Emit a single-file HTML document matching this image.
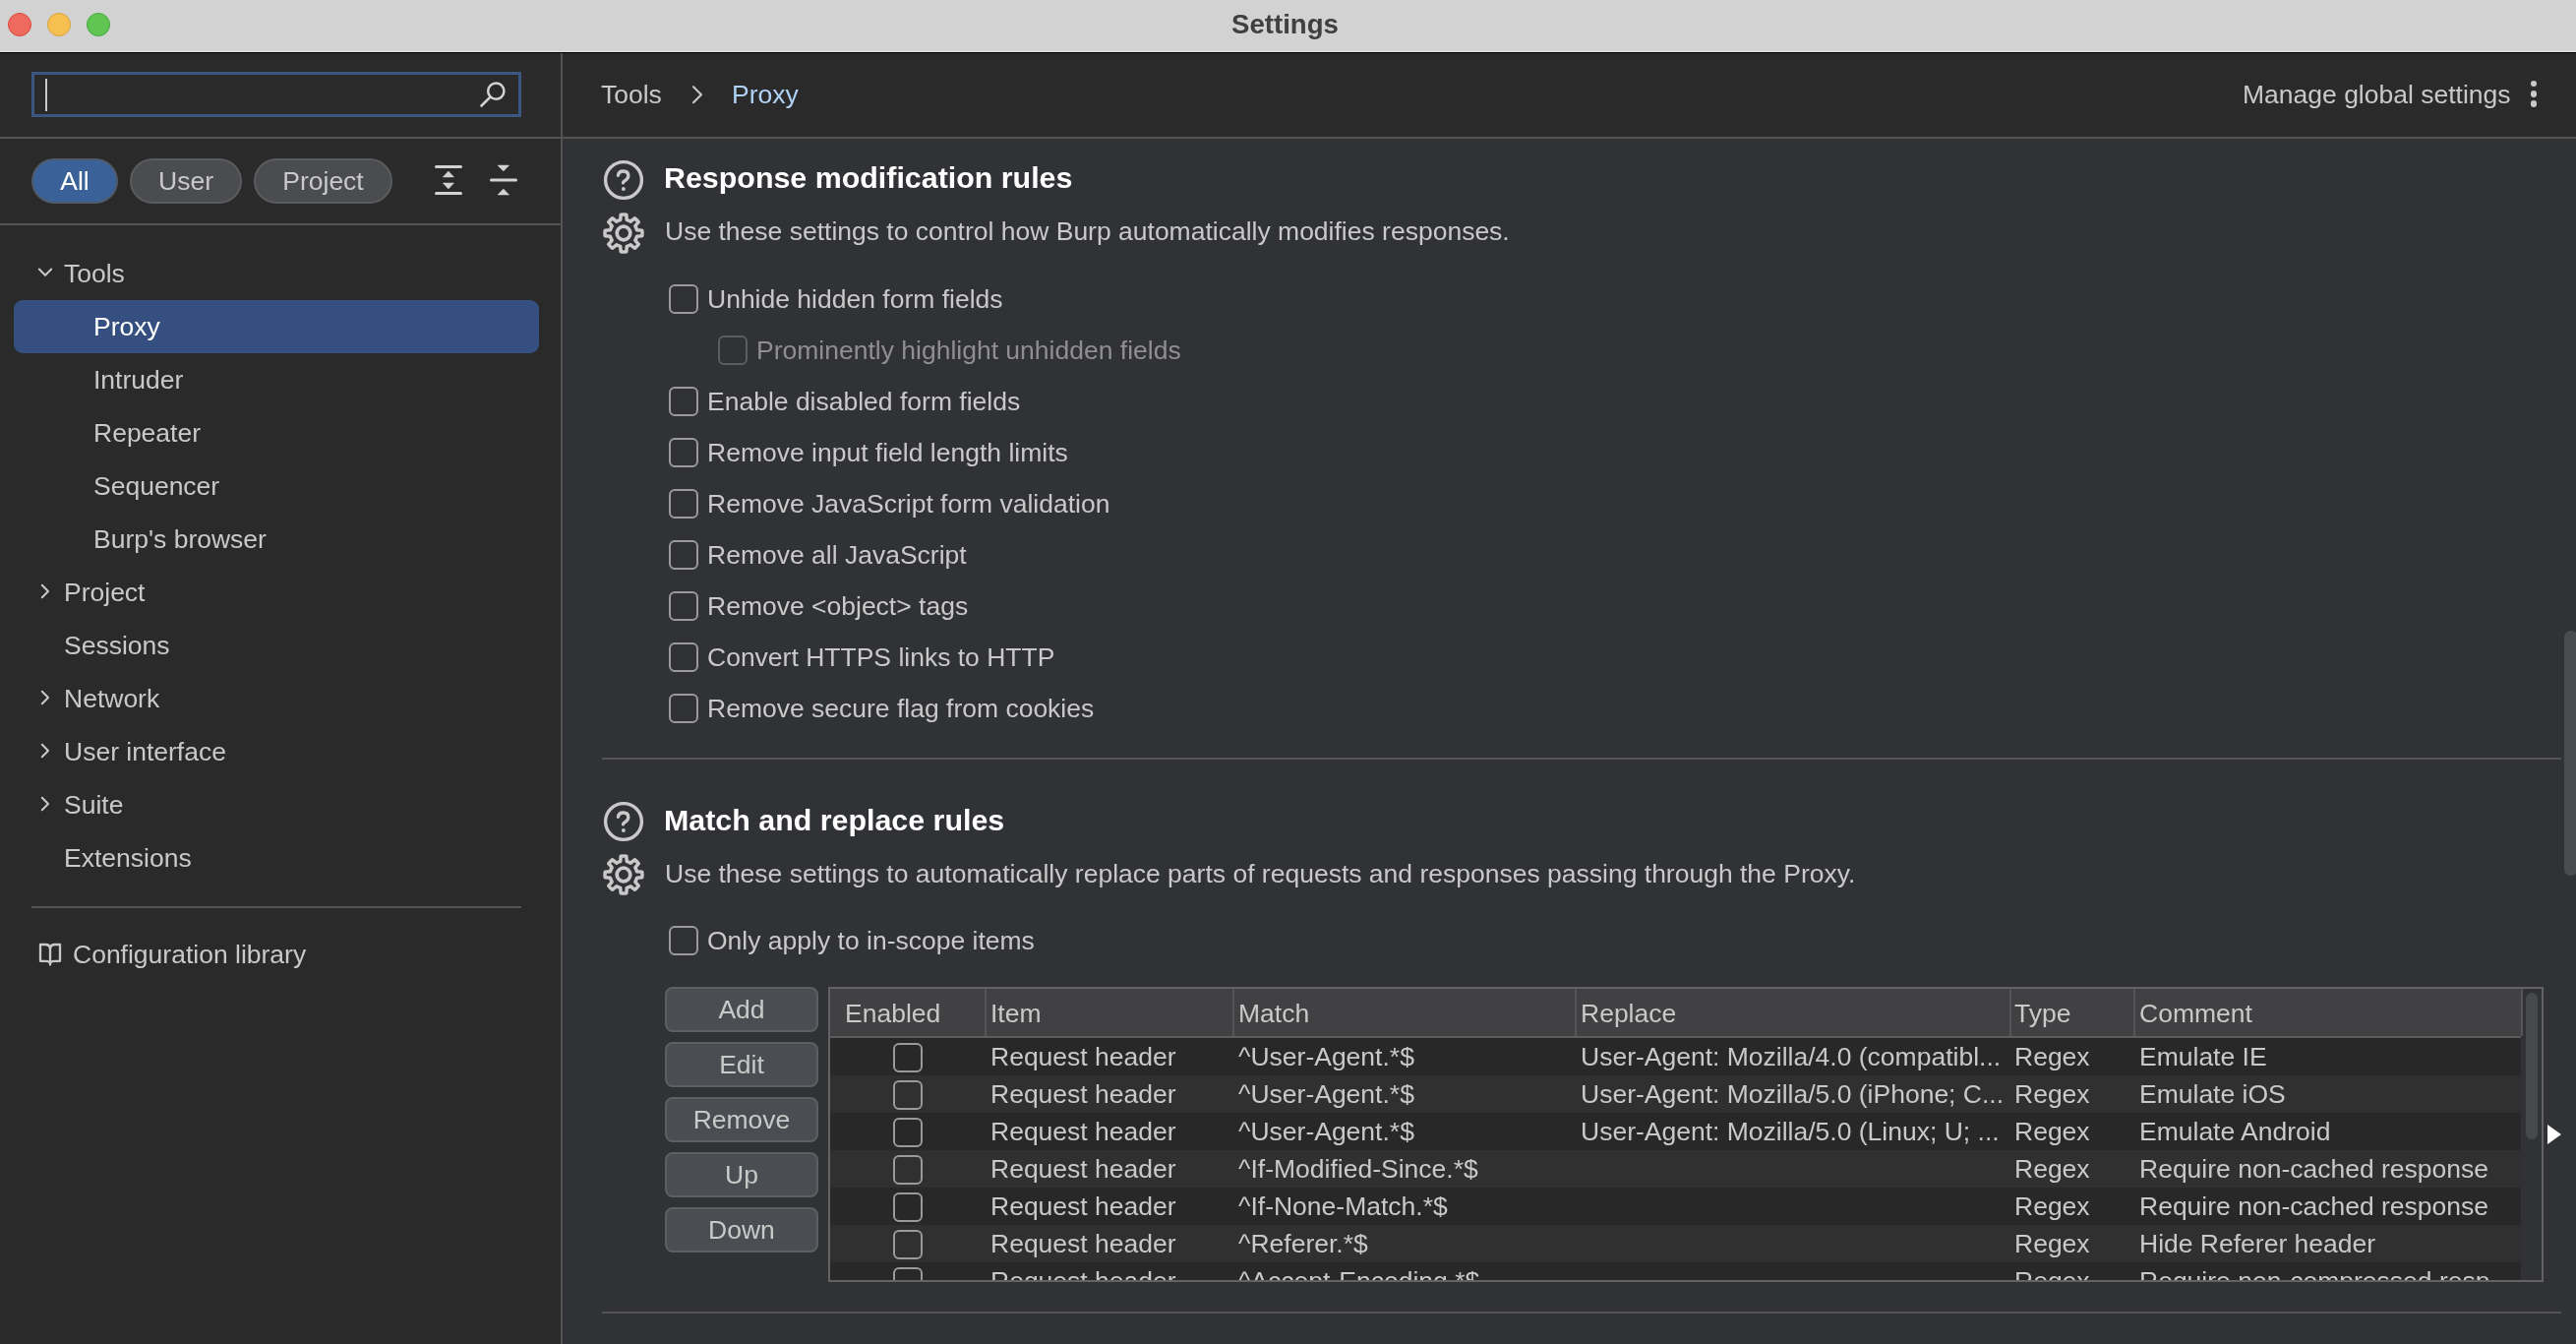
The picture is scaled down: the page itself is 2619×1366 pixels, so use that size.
<!DOCTYPE html>
<html><head><meta charset="utf-8">
<style>
*{box-sizing:border-box;margin:0;padding:0}
html,body{width:2619px;height:1366px;overflow:hidden;}
body{will-change:transform;background:#313235;font-family:"Liberation Sans",sans-serif}
.a{position:absolute}
.t{position:absolute;white-space:nowrap;line-height:30px;font-size:26.5px;color:#c9c9c9}
#titlebar{left:0;top:0;width:2619px;height:52px;background:#d2d2d2}
.tl{position:absolute;width:24px;height:24px;border-radius:50%;top:13px}
#sidebar{left:0;top:54px;width:571px;height:1312px;background:#2a2a2a}
#header{left:572px;top:54px;width:2048px;height:86px;background:#2a2a2a}
.hl{position:absolute;background:#535353}
.pill{position:absolute;top:161px;height:46px;border-radius:23px;border:2px solid #5a5b5d;background:#4a4c4f;color:#c9c9c9;font-size:26.5px;line-height:42px;text-align:center}
.cb{position:absolute;width:30px;height:30px;border:2px solid #9a9a9a;border-radius:6px}
.btn{position:absolute;left:676px;width:156px;height:46px;border:2px solid #5e5f61;border-radius:8px;background:#4a4d51;color:#c9c9c9;font-size:26.5px;line-height:42px;text-align:center}
</style></head><body>
<!-- title bar -->
<div id="titlebar" class="a"></div>
<div class="a" style="left:0;top:52px;width:2619px;height:1px;background:#e4e4e4"></div>
<div class="a" style="left:0;top:53px;width:2619px;height:1px;background:#000"></div>
<div class="tl" style="left:8px;background:#ee6a5e;border:1px solid #d9483c"></div>
<div class="tl" style="left:48px;background:#f5c04f;border:1px solid #d9a13a"></div>
<div class="tl" style="left:88px;background:#61c554;border:1px solid #3fa93a"></div>
<div class="t" style="left:-3px;width:2619px;text-align:center;top:10px;font-weight:bold;font-size:27.6px;color:#404040">Settings</div>

<div id="sidebar" class="a"></div>
<div id="header" class="a"></div>

<!-- sidebar -->
<div class="hl" style="left:570px;top:54px;width:2px;height:1312px"></div>
<div class="hl" style="left:0;top:139px;width:2619px;height:2px"></div>
<div class="hl" style="left:0;top:227px;width:571px;height:2px"></div>
<div class="a" style="left:32px;top:73px;width:498px;height:46px;border:3px solid #3a5683;background:#2a2a2a"></div>
<div class="a" style="left:46px;top:80px;width:2px;height:33px;background:#c9c9c9"></div>
<svg class="a" style="left:480px;top:76px" width="44" height="40" viewBox="480 76 44 40"><circle cx="504.3" cy="92.7" r="8.1" fill="none" stroke="#d2d2d2" stroke-width="2.5"/><line x1="498.4" y1="98.6" x2="489.5" y2="107.5" stroke="#d2d2d2" stroke-width="2.6" stroke-linecap="round"/></svg>
<div class="pill" style="left:32px;width:88px;background:#3a6299;border-color:#4f5b6b;color:#ffffff">All</div>
<div class="pill" style="left:132px;width:114px">User</div>
<div class="pill" style="left:258px;width:141px">Project</div>
<svg class="a" style="left:430px;top:160px" width="110" height="45" viewBox="430 160 110 45">
<g fill="#d2d2d2" stroke="#d2d2d2">
<line x1="443.5" y1="169.5" x2="468.5" y2="169.5" stroke-width="3" stroke-linecap="round"/>
<line x1="443.5" y1="196.5" x2="468.5" y2="196.5" stroke-width="3" stroke-linecap="round"/>
<polygon points="450.3,180 461.5,180 455.9,174" stroke-width="0.5"/>
<polygon points="450.3,186 461.5,186 455.9,192" stroke-width="0.5"/>
<line x1="499.5" y1="183" x2="524.5" y2="183" stroke-width="3" stroke-linecap="round"/>
<polygon points="506,168 517.6,168 511.8,174" stroke-width="0.5"/>
<polygon points="506,198 517.6,198 511.8,192" stroke-width="0.5"/>
</g></svg>
<div class="a" style="left:14px;top:305px;width:534px;height:54px;border-radius:9px;background:#355080"></div>
<svg class="a" style="left:30px;top:260px" width="40" height="700" viewBox="30 260 40 700"><g fill="none" stroke="#c9c9c9" stroke-width="2" stroke-linecap="round" stroke-linejoin="round">
<polyline points="39.8,273.5 46,279.7 52.2,273.5"/>
<polyline points="42.8,594.8 49,601 42.8,607.2"/>
<polyline points="42.8,702.8 49,709 42.8,715.2"/>
<polyline points="42.8,756.8 49,763 42.8,769.2"/>
<polyline points="42.8,810.8 49,817 42.8,823.2"/>
</g></svg>
<div class="t" style="left:65px;top:263px">Tools</div>
<div class="t" style="left:95px;top:317px;color:#ffffff">Proxy</div>
<div class="t" style="left:95px;top:371px">Intruder</div>
<div class="t" style="left:95px;top:425px">Repeater</div>
<div class="t" style="left:95px;top:479px">Sequencer</div>
<div class="t" style="left:95px;top:533px">Burp's browser</div>
<div class="t" style="left:65px;top:587px">Project</div>
<div class="t" style="left:65px;top:641px">Sessions</div>
<div class="t" style="left:65px;top:695px">Network</div>
<div class="t" style="left:65px;top:749px">User interface</div>
<div class="t" style="left:65px;top:803px">Suite</div>
<div class="t" style="left:65px;top:857px">Extensions</div>
<div class="hl" style="left:32px;top:921px;width:498px;height:2px"></div>
<svg class="a" style="left:34px;top:952px" width="34" height="34" viewBox="34 952 34 34"><g fill="none" stroke="#c9c9c9" stroke-width="2.3" stroke-linejoin="round" stroke-linecap="round">
<path d="M51,963.5 Q50.2,960 46.5,960 H41 V976.8 H46.5 Q50,976.8 51,978.6"/>
<path d="M51,963.5 Q51.8,960 55.5,960 H61 V976.8 H55.5 Q52,976.8 51,978.6"/>
<path d="M51,963.5 V980.6"/>
</g></svg>
<div class="t" style="left:74px;top:955px">Configuration library</div>

<!-- main header -->
<div class="t" style="left:611px;top:81px">Tools</div>
<svg class="a" style="left:695px;top:80px" width="30" height="30" viewBox="695 80 30 30"><polyline points="705,88.2 713,96.2 705,104.2" fill="none" stroke="#c9c9c9" stroke-width="2.1" stroke-linecap="round" stroke-linejoin="round"/></svg>
<div class="t" style="left:744px;top:81px;color:#b0d2f6">Proxy</div>
<div class="t" style="left:2280px;top:81px">Manage global settings</div>
<div class="a" style="left:2572.5px;top:81.5px;width:6.5px;height:6.5px;border-radius:50%;background:#c9c9c9"></div>
<div class="a" style="left:2572.5px;top:92px;width:6.5px;height:6.5px;border-radius:50%;background:#c9c9c9"></div>
<div class="a" style="left:2572.5px;top:102px;width:6.5px;height:6.5px;border-radius:50%;background:#c9c9c9"></div>
<div class="a" style="left:2607px;top:641px;width:14px;height:249px;border-radius:7px;background:#4b4c4e"></div>

<svg class="a" style="left:610px;top:158px" width="50" height="105" viewBox="610 158 50 105"><g transform="translate(0,0)" fill="none" stroke="#c9c9c9" stroke-width="3.4" stroke-linecap="round" stroke-linejoin="round">
<circle cx="634" cy="183" r="18.4"/>
<path d="M628.4,178.4 Q628.9,174 633.7,174 Q638.8,174 638.8,178.6 Q638.8,181.7 635.6,183.5 Q633.5,184.7 633.4,185.8" stroke-width="3.3"/>
<circle cx="633.9" cy="192" r="1.3" fill="#c9c9c9" stroke-width="1.3"/>
<path d="M631.18,218.21 A19.0,19.0 0 0 1 636.82,218.21 L637.24,223.48 A13.9,13.9 0 0 1 641.26,225.15 L645.29,221.72 A19.0,19.0 0 0 1 649.28,225.71 L645.85,229.74 A13.9,13.9 0 0 1 647.52,233.76 L652.79,234.18 A19.0,19.0 0 0 1 652.79,239.82 L647.52,240.24 A13.9,13.9 0 0 1 645.85,244.26 L649.28,248.29 A19.0,19.0 0 0 1 645.29,252.28 L641.26,248.85 A13.9,13.9 0 0 1 637.24,250.52 L636.82,255.79 A19.0,19.0 0 0 1 631.18,255.79 L630.76,250.52 A13.9,13.9 0 0 1 626.74,248.85 L622.71,252.28 A19.0,19.0 0 0 1 618.72,248.29 L622.15,244.26 A13.9,13.9 0 0 1 620.48,240.24 L615.21,239.82 A19.0,19.0 0 0 1 615.21,234.18 L620.48,233.76 A13.9,13.9 0 0 1 622.15,229.74 L618.72,225.71 A19.0,19.0 0 0 1 622.71,221.72 L626.74,225.15 A13.9,13.9 0 0 1 630.76,223.48 L631.18,218.21 Z" stroke-width="3.5"/>
<circle cx="634" cy="237" r="6.8" stroke-width="3.7"/>
</g></svg>
<div class="t" style="left:675px;top:163px;font-size:30.4px;line-height:34px;font-weight:bold;color:#ffffff">Response modification rules</div>
<div class="t" style="left:676px;top:220px">Use these settings to control how Burp automatically modifies responses.</div>
<div class="cb" style="left:680px;top:289px"></div>
<div class="t" style="left:719px;top:289px">Unhide hidden form fields</div>
<div class="cb" style="left:730px;top:341px;border-color:#5c5d5f"></div>
<div class="t" style="left:769px;top:341px;color:#8f8f90">Prominently highlight unhidden fields</div>
<div class="cb" style="left:680px;top:393px"></div>
<div class="t" style="left:719px;top:393px">Enable disabled form fields</div>
<div class="cb" style="left:680px;top:445px"></div>
<div class="t" style="left:719px;top:445px">Remove input field length limits</div>
<div class="cb" style="left:680px;top:497px"></div>
<div class="t" style="left:719px;top:497px">Remove JavaScript form validation</div>
<div class="cb" style="left:680px;top:549px"></div>
<div class="t" style="left:719px;top:549px">Remove all JavaScript</div>
<div class="cb" style="left:680px;top:601px"></div>
<div class="t" style="left:719px;top:601px">Remove &lt;object&gt; tags</div>
<div class="cb" style="left:680px;top:653px"></div>
<div class="t" style="left:719px;top:653px">Convert HTTPS links to HTTP</div>
<div class="cb" style="left:680px;top:705px"></div>
<div class="t" style="left:719px;top:705px">Remove secure flag from cookies</div>
<div class="hl" style="left:612px;top:770px;width:1992px;height:2px"></div>

<svg class="a" style="left:610px;top:810px" width="50" height="105" viewBox="610 810 50 105"><g transform="translate(0,652)" fill="none" stroke="#c9c9c9" stroke-width="3.4" stroke-linecap="round" stroke-linejoin="round">
<circle cx="634" cy="183" r="18.4"/>
<path d="M628.4,178.4 Q628.9,174 633.7,174 Q638.8,174 638.8,178.6 Q638.8,181.7 635.6,183.5 Q633.5,184.7 633.4,185.8" stroke-width="3.3"/>
<circle cx="633.9" cy="192" r="1.3" fill="#c9c9c9" stroke-width="1.3"/>
<path d="M631.18,218.21 A19.0,19.0 0 0 1 636.82,218.21 L637.24,223.48 A13.9,13.9 0 0 1 641.26,225.15 L645.29,221.72 A19.0,19.0 0 0 1 649.28,225.71 L645.85,229.74 A13.9,13.9 0 0 1 647.52,233.76 L652.79,234.18 A19.0,19.0 0 0 1 652.79,239.82 L647.52,240.24 A13.9,13.9 0 0 1 645.85,244.26 L649.28,248.29 A19.0,19.0 0 0 1 645.29,252.28 L641.26,248.85 A13.9,13.9 0 0 1 637.24,250.52 L636.82,255.79 A19.0,19.0 0 0 1 631.18,255.79 L630.76,250.52 A13.9,13.9 0 0 1 626.74,248.85 L622.71,252.28 A19.0,19.0 0 0 1 618.72,248.29 L622.15,244.26 A13.9,13.9 0 0 1 620.48,240.24 L615.21,239.82 A19.0,19.0 0 0 1 615.21,234.18 L620.48,233.76 A13.9,13.9 0 0 1 622.15,229.74 L618.72,225.71 A19.0,19.0 0 0 1 622.71,221.72 L626.74,225.15 A13.9,13.9 0 0 1 630.76,223.48 L631.18,218.21 Z" stroke-width="3.5"/>
<circle cx="634" cy="237" r="6.8" stroke-width="3.7"/>
</g></svg>
<div class="t" style="left:675px;top:816px;font-size:30.4px;line-height:34px;font-weight:bold;color:#ffffff">Match and replace rules</div>
<div class="t" style="left:676px;top:873px">Use these settings to automatically replace parts of requests and responses passing through the Proxy.</div>
<div class="cb" style="left:680px;top:941px"></div>
<div class="t" style="left:719px;top:941px">Only apply to in-scope items</div>
<div class="btn" style="top:1003px">Add</div>
<div class="btn" style="top:1059px">Edit</div>
<div class="btn" style="top:1115px">Remove</div>
<div class="btn" style="top:1171px">Up</div>
<div class="btn" style="top:1227px">Down</div>
<div class="a" style="left:842px;top:1003px;width:1744px;height:300px;border:2px solid #636363;overflow:hidden;background:#313235">
<div class="a" style="left:0;top:0;width:1721px;height:296px;overflow:hidden">
<div class="a" style="left:0;top:0;width:1719px;height:48px;background:#414143"></div>
<div class="a" style="left:0;top:48px;width:1719px;height:2px;background:#5c5c5c"></div>
<div class="a" style="left:157px;top:0;width:2px;height:48px;background:#555557"></div>
<div class="a" style="left:409px;top:0;width:2px;height:48px;background:#555557"></div>
<div class="a" style="left:757px;top:0;width:2px;height:48px;background:#555557"></div>
<div class="a" style="left:1199px;top:0;width:2px;height:48px;background:#555557"></div>
<div class="a" style="left:1325px;top:0;width:2px;height:48px;background:#555557"></div>
<div class="a" style="left:1719px;top:0;width:2px;height:48px;background:#555557"></div>
<div class="t" style="left:15px;top:10px">Enabled</div>
<div class="t" style="left:163px;top:10px">Item</div>
<div class="t" style="left:415px;top:10px">Match</div>
<div class="t" style="left:763px;top:10px">Replace</div>
<div class="t" style="left:1204px;top:10px">Type</div>
<div class="t" style="left:1331px;top:10px">Comment</div>
<div class="a" style="left:0;top:50px;width:1719px;height:38px;background:#282828"></div>
<div class="cb" style="left:64px;top:55px"></div>
<div class="t" style="left:163px;top:54px">Request header</div>
<div class="t" style="left:415px;top:54px">^User-Agent.*$</div>
<div class="t" style="left:763px;top:54px">User-Agent: Mozilla/4.0 (compatibl...</div>
<div class="t" style="left:1204px;top:54px">Regex</div>
<div class="t" style="left:1331px;top:54px">Emulate IE</div>
<div class="a" style="left:0;top:88px;width:1719px;height:38px;background:#303030"></div>
<div class="cb" style="left:64px;top:93px"></div>
<div class="t" style="left:163px;top:92px">Request header</div>
<div class="t" style="left:415px;top:92px">^User-Agent.*$</div>
<div class="t" style="left:763px;top:92px">User-Agent: Mozilla/5.0 (iPhone; C...</div>
<div class="t" style="left:1204px;top:92px">Regex</div>
<div class="t" style="left:1331px;top:92px">Emulate iOS</div>
<div class="a" style="left:0;top:126px;width:1719px;height:38px;background:#282828"></div>
<div class="cb" style="left:64px;top:131px"></div>
<div class="t" style="left:163px;top:130px">Request header</div>
<div class="t" style="left:415px;top:130px">^User-Agent.*$</div>
<div class="t" style="left:763px;top:130px">User-Agent: Mozilla/5.0 (Linux; U; ...</div>
<div class="t" style="left:1204px;top:130px">Regex</div>
<div class="t" style="left:1331px;top:130px">Emulate Android</div>
<div class="a" style="left:0;top:164px;width:1719px;height:38px;background:#303030"></div>
<div class="cb" style="left:64px;top:169px"></div>
<div class="t" style="left:163px;top:168px">Request header</div>
<div class="t" style="left:415px;top:168px">^If-Modified-Since.*$</div>
<div class="t" style="left:1204px;top:168px">Regex</div>
<div class="t" style="left:1331px;top:168px">Require non-cached response</div>
<div class="a" style="left:0;top:202px;width:1719px;height:38px;background:#282828"></div>
<div class="cb" style="left:64px;top:207px"></div>
<div class="t" style="left:163px;top:206px">Request header</div>
<div class="t" style="left:415px;top:206px">^If-None-Match.*$</div>
<div class="t" style="left:1204px;top:206px">Regex</div>
<div class="t" style="left:1331px;top:206px">Require non-cached response</div>
<div class="a" style="left:0;top:240px;width:1719px;height:38px;background:#303030"></div>
<div class="cb" style="left:64px;top:245px"></div>
<div class="t" style="left:163px;top:244px">Request header</div>
<div class="t" style="left:415px;top:244px">^Referer.*$</div>
<div class="t" style="left:1204px;top:244px">Regex</div>
<div class="t" style="left:1331px;top:244px">Hide Referer header</div>
<div class="a" style="left:0;top:278px;width:1719px;height:38px;background:#282828"></div>
<div class="cb" style="left:64px;top:283px"></div>
<div class="t" style="left:163px;top:282px">Request header</div>
<div class="t" style="left:415px;top:282px">^Accept-Encoding.*$</div>
<div class="t" style="left:1204px;top:282px">Regex</div>
<div class="t" style="left:1331px;top:282px">Require non-compressed resp...</div>
</div>
<div class="a" style="left:1724px;top:4px;width:12px;height:149px;border-radius:6px;background:#48494b"></div>
</div>
<svg class="a" style="left:2585px;top:1138px" width="25" height="30" viewBox="2585 1138 25 30"><polygon points="2590,1143 2604,1153 2590,1163" fill="#ffffff"/></svg>
<div class="hl" style="left:612px;top:1333px;width:1992px;height:2px"></div>
</body></html>
